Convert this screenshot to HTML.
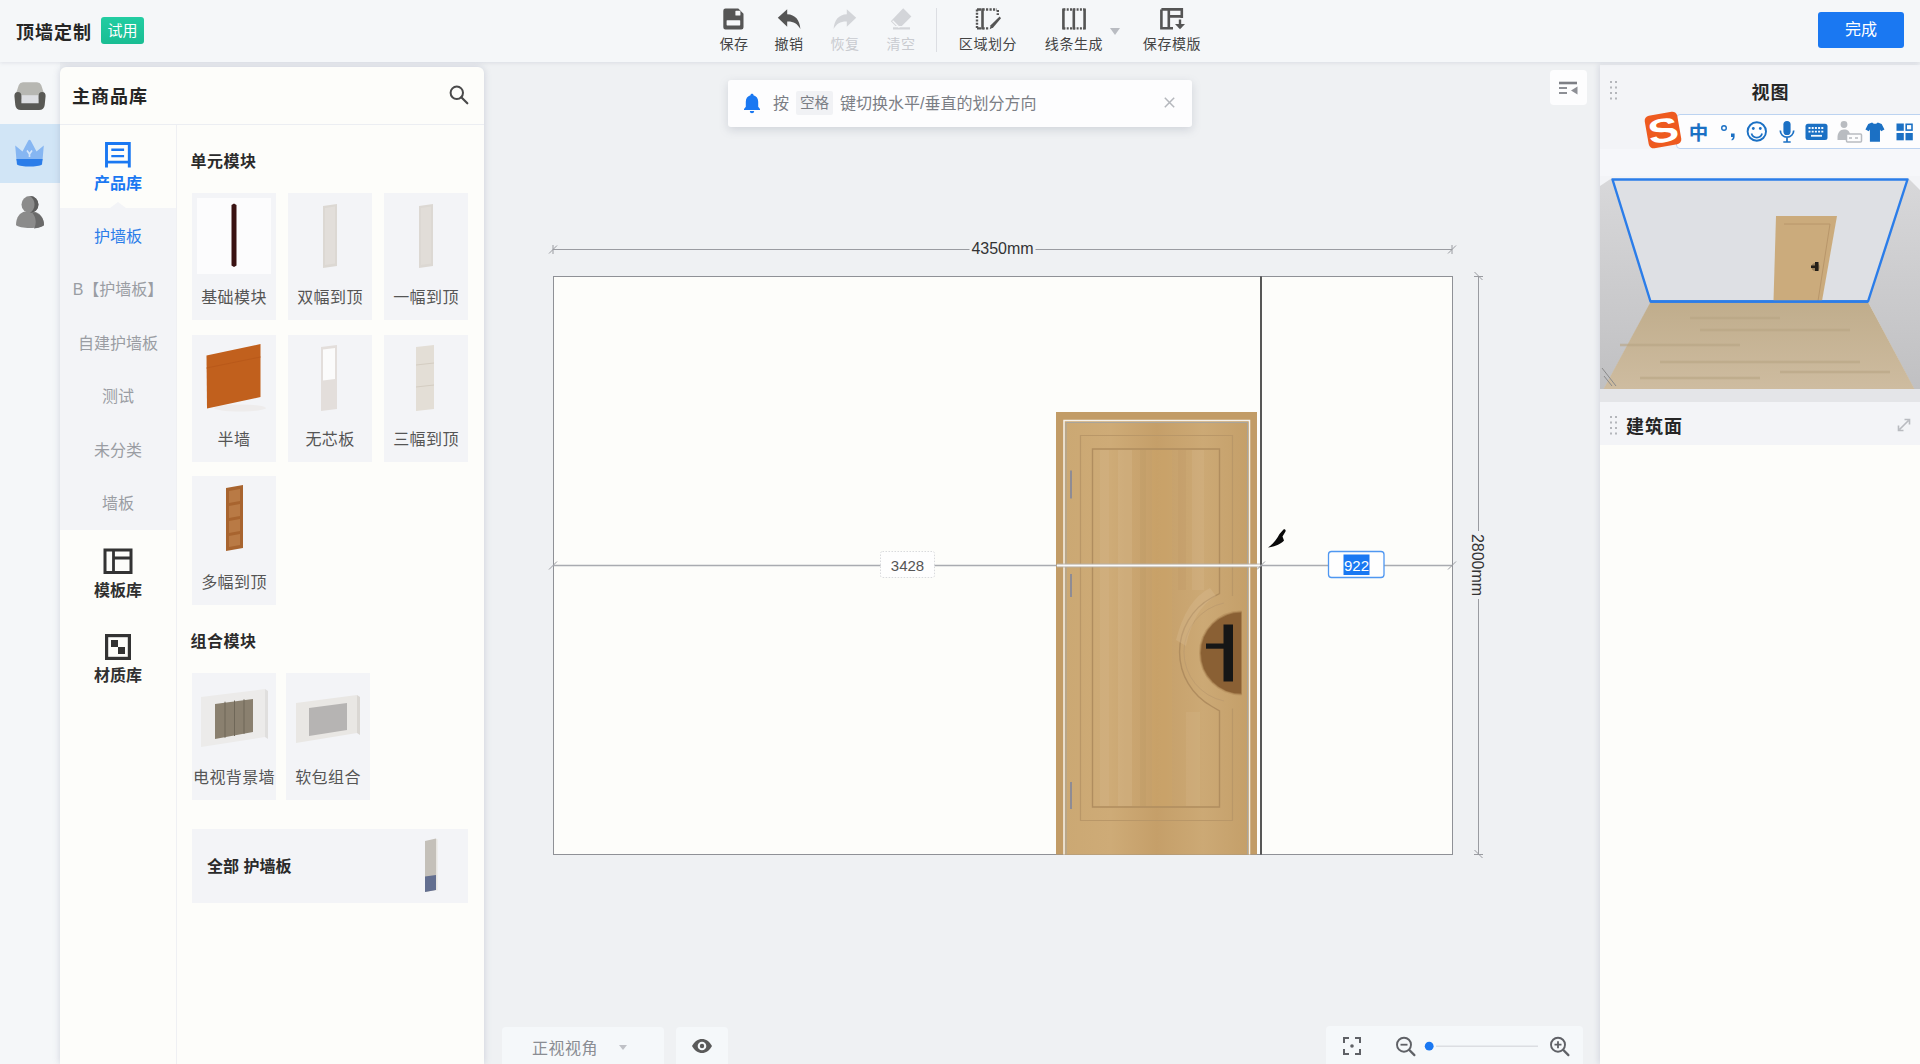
<!DOCTYPE html>
<html lang="zh-CN">
<head>
<meta charset="utf-8">
<title>顶墙定制</title>
<style>
*{box-sizing:border-box;margin:0;padding:0}
html,body{width:1920px;height:1064px;overflow:hidden}
body{position:relative;background:#eff1f3;font-family:"Liberation Sans","Noto Sans CJK SC",sans-serif;color:#333;font-size:14px}
.abs{position:absolute}
/* top bar */
#topbar{position:absolute;left:0;top:0;width:1920px;height:62px;background:#f5f7f9;box-shadow:0 1px 4px rgba(110,120,150,.16);z-index:3}
#title{position:absolute;left:16px;top:20px;font-size:18px;font-weight:700;line-height:27px;color:#262626;letter-spacing:1px}
#badge{position:absolute;left:101px;top:17px;width:43px;height:27px;border-radius:3px;background:linear-gradient(180deg,#23cda2,#19bd93);color:#fff;font-size:15px;line-height:27px;text-align:center}
.tb{position:absolute;top:7px;width:70px;text-align:center;letter-spacing:.6px;font-size:14px;color:#444;line-height:20px}
.tb svg{display:block;margin:0 auto 3px}
.tb.dis{color:#c9cbd0}
#done{position:absolute;left:1818px;top:12px;width:86px;height:36px;border-radius:3px;background:#1a78f2;color:#fff;font-size:16px;line-height:36px;text-align:center}
/* left rail */
#rail{position:absolute;left:0;top:62px;width:60px;height:1002px;background:#f5f7f9}
#railsel{position:absolute;left:0;top:125px;width:60px;height:59px;background:#d1e5f6}
/* panel */
#panel{position:absolute;left:60px;top:67px;width:424px;height:997px;background:#fdfdfa;border-radius:6px 6px 0 0;box-shadow:0 0 7px rgba(110,120,150,.28)}
#phead{position:absolute;left:0;top:0;width:424px;height:58px;border-bottom:1px solid #eceef2}
#phead b{position:absolute;left:12px;top:17px;font-size:18px;line-height:27px;color:#262626;letter-spacing:1px}
#cats{position:absolute;left:0;top:58px;width:117px;height:939px;border-right:1px solid #eff0f3}
#subcats{position:absolute;left:0;top:83px;width:116px;height:322px;background:#f3f4f7}
.sc{position:absolute;left:0;width:116px;text-align:center;font-size:16px;color:#9a9da3;line-height:20px}
.sc.on{color:#2b7de9}
.big{position:absolute;left:0;width:116px;text-align:center;font-size:16px;font-weight:700;color:#303030;line-height:20px}
.big.on{color:#1a78f2}
.sect{position:absolute;left:130.500px;letter-spacing:.5px;margin-top:1.500px;font-size:16px;font-weight:700;color:#2a2a2a;line-height:20px}
.card{position:absolute;width:84px;height:127px;background:#f3f4f7}
.card span{position:absolute;left:-4px;right:-4px;bottom:12px;text-align:center;font-size:16px;color:#555;line-height:20px;white-space:nowrap;letter-spacing:.4px}
.card svg{position:absolute;left:0;top:0}
#allbtn{position:absolute;left:132px;top:762px;width:276px;height:74px;background:#f3f4f7}
#allbtn b{position:absolute;left:15px;top:28px;font-size:16px;line-height:20px;color:#2a2a2a}
/* canvas */
#wall{position:absolute;left:553px;top:276px;width:900px;height:579px;background:#fdfdfa;border:1px solid #8f9196}
.lbl{position:absolute;font-size:14px;color:#333;line-height:18px;text-align:center}
/* notification */
#note{position:absolute;left:728px;top:80px;width:464px;height:47px;background:#fdfdfe;border-radius:3px;box-shadow:0 3px 10px rgba(100,110,130,.22);font-size:16px;color:#7b7e85;line-height:47px}
/* right */
#right{position:absolute;left:1600px;top:65px;width:320px;height:999px;background:#fdfdfa;box-shadow:-2px 0 5px rgba(120,130,160,.18)}
</style>
</head>
<body>
<div id="topbar">
  <div id="title">顶墙定制</div>
  <div id="badge">试用</div>

  <!-- toolbar -->
  <div class="tb" style="left:699px">
    <svg width="24" height="24" viewBox="0 0 24 24"><path d="M3.5 1.5h12.8l5.2 5.2v13.6a2.2 2.2 0 0 1-2.2 2.2H3.5a2.2 2.2 0 0 1-2.2-2.2V3.7a2.2 2.2 0 0 1 2.2-2.2z" fill="#555"/><rect x="13.400" y="3.800" width="5" height="4.800" rx=".6" fill="#f6f7f9"/><rect x="4.6" y="13.2" width="13.6" height="5.2" rx=".6" fill="#f6f7f9"/></svg>保存</div>
  <div class="tb" style="left:754px">
    <svg width="24" height="24" viewBox="0 0 24 24"><path d="M10.200 2.200v5c8 .4 12.600 5.600 13.200 14.800-3-5.200-7-7.600-13.200-7.400v5.200L.8 10.800z" fill="#555"/></svg>撤销</div>
  <div class="tb dis" style="left:810px">
    <svg width="24" height="24" viewBox="0 0 24 24"><path d="M13.800 2.200v5C5.800 7.600 1.200 12.800.600 22c3-5.200 7-7.600 13.200-7.400v5.200l9.400-9z" fill="#d3d5d9"/></svg>恢复</div>
  <div class="tb dis" style="left:866px">
    <svg width="24" height="24" viewBox="0 0 24 24"><path d="M14.200 1.200l8.200 8.200-9.600 9.600H6.600L1.800 14.200z" fill="#d3d5d9"/><path d="M4 21.400h17" stroke="#d3d5d9" stroke-width="2.200"/><path d="M3.600 13.800l6.800 6.800" stroke="#f6f7f9" stroke-width="1.400"/></svg>清空</div>
  <div class="abs" style="left:936px;top:8px;width:1px;height:44px;background:#dcdee3"></div>
  <div class="tb" style="left:953px">
    <svg width="26" height="24" viewBox="0 0 26 24"><path d="M2 2.500v19" stroke="#555" stroke-width="2.400" stroke-dasharray="2 1.300"/><path d="M7.500 1.400v21" stroke="#555" stroke-width="2.600"/><path d="M7.500 2.500h14.500" stroke="#555" stroke-width="2.400" stroke-dasharray="2.200 1.300"/><path d="M7.500 21.400h7" stroke="#555" stroke-width="2.400" stroke-dasharray="2.200 1.300"/><path d="M2 2.500h4M2 21.400h4" stroke="#555" stroke-width="2.400"/><path d="M22.800 3v5" stroke="#555" stroke-width="2.400" stroke-dasharray="2 1.300"/><path d="M24.600 9.600l1.400 1.600-7.600 9-3.600 2 .8-4z" fill="#555"/></svg>区域划分</div>
  <div class="tb" style="left:1039px">
    <svg width="26" height="24" viewBox="0 0 26 24"><path d="M2.400 1.400v21M12.800 1.400v21M23.600 1.400v21" stroke="#555" stroke-width="2.600"/><path d="M2.400 2.500h21M2.400 21.400h21" stroke="#555" stroke-width="2.400" stroke-dasharray="2 1.300"/></svg>线条生成</div>
  <svg class="abs" style="left:1110px;top:28px" width="10" height="7" viewBox="0 0 10 7"><path d="M0 0h10L5 7z" fill="#b9bcc2"/></svg>
  <div class="tb" style="left:1137px">
    <svg width="26" height="24" viewBox="0 0 26 24"><path d="M2.400 2.400h20.400v8.500M2.400 2.400v18.800h11.600" fill="none" stroke="#555" stroke-width="2.600"/><path d="M9.800 2.400v18.800M9.800 9.400h13" stroke="#555" stroke-width="2.600"/><path d="M21 12.500v8.500" stroke="#555" stroke-width="2.400"/><path d="M16 17l5 5.200 5-5.200z" fill="#555"/></svg>保存模版</div>
  <div id="done">完成</div>
</div>
<div id="rail"><div id="railsel" style="top:62px"></div>
  <!-- sofa -->
  <svg class="abs" style="left:13.500px;top:19.800px" width="32" height="29" viewBox="0 0 32 29"><path d="M9 .3h14q3 0 4.200 2.800l2.300 7v7h-27v-7l2.300-7Q6 .3 9 .3z" fill="#b7b7b2"/><rect x="7.200" y="13.200" width="17.600" height="8.500" fill="#dddee2"/><path d="M.4 14q0-4 3.500-4t3.500 4v7.200h17.200V14q0-4 3.500-4t3.500 4l-.9 9q-.6 5-5.600 5H6.900q-5 0-5.600-5z" fill="#595955"/></svg>
  <!-- crown -->
  <svg class="abs" style="left:14px;top:76px" width="31" height="30" viewBox="0 0 31 30"><path d="M1.200 7.500l7.300 6L14.300 2.500q1.200-1.500 2.400 0L22.500 13.500l7.300-6-1.300 15h-26z" fill="#86b6f2"/><path d="M2.400 21h26.200l-.6 5.500c-4 2.800-21 2.800-25 0z" fill="#2b7de9"/><path d="M13 12.500l2.500 3.500 2.500-3.500M15.500 16v3" stroke="#d6e7fb" stroke-width="1.600" fill="none"/></svg>
  <!-- user -->
  <svg class="abs" style="left:15px;top:133px" width="30" height="34" viewBox="0 0 30 34"><path d="M1 30c0-8 4-12.500 9-13.500h9c5 1 10 5.500 10 13.500-3 4-25 4-28 0z" fill="#8b8b8b"/><circle cx="15" cy="9.500" r="8.500" fill="#8b8b8b"/><path d="M15 1a8.500 8.500 0 0 1 0 17c3-2 4.500-5 4.500-8.500S18 3 15 1z" fill="#5d5d5d"/><path d="M17 17.500h2.500c5 1 9.500 5.500 9.500 12.500-1.500 2-6 3-10 3.500 3-5 2-12-2-16z" fill="#6a6a6a"/></svg>
</div>
<div id="panel">
  <div id="phead"><b>主商品库</b>
    <svg class="abs" style="left:388px;top:17px" width="22" height="22" viewBox="0 0 22 22"><circle cx="8.800" cy="8.800" r="6.200" fill="none" stroke="#4a4a4a" stroke-width="2"/><path d="M13.300 13.300l6 6" stroke="#4a4a4a" stroke-width="2.200" stroke-linecap="round"/></svg>
  </div>
  <div id="cats">
    <svg class="abs" style="left:44.500px;top:17px" width="26" height="26" viewBox="0 0 26 26"><path d="M1.500 25.400V1.500h22.800v23.900" fill="none" stroke="#1a78f2" stroke-width="2.900"/><path d="M1.500 20.100h22.800" stroke="#1a78f2" stroke-width="2.700"/><path d="M6.300 7.700h12.800M6.300 14.100h12.800" stroke="#1a78f2" stroke-width="2.400"/></svg>
    <div class="big on" style="top:49px">产品库</div>
    <div id="subcats">
      <svg class="abs" style="left:50px;top:-6px" width="16" height="6" viewBox="0 0 16 6"><path d="M0 6l8-6 8 6z" fill="#f3f4f7"/></svg>
      <div class="sc on" style="top:19px">护墙板</div>
      <div class="sc" style="top:72px">B【护墙板】</div>
      <div class="sc" style="top:126px">自建护墙板</div>
      <div class="sc" style="top:179px">测试</div>
      <div class="sc" style="top:233px">未分类</div>
      <div class="sc" style="top:286px">墙板</div>
    </div>
    <svg class="abs" style="left:42.500px;top:423px" width="30" height="27" viewBox="0 0 30 27"><rect x="2" y="2" width="26" height="22.500" fill="none" stroke="#333" stroke-width="3"/><path d="M10.500 2v22.500M10.500 10h17.500" stroke="#333" stroke-width="2.800"/></svg>
    <div class="big" style="top:456px">模板库</div>
    <svg class="abs" style="left:44px;top:508px" width="28" height="28" viewBox="0 0 28 28"><rect x="2.600" y="2.600" width="22.800" height="22.800" fill="none" stroke="#333" stroke-width="3.200"/><rect x="7" y="7" width="7" height="7" fill="#333"/><rect x="14" y="14" width="7" height="7" fill="#333"/></svg>
    <div class="big" style="top:541px">材质库</div>
  </div>
  <div class="sect" style="top:83px">单元模块</div>
  <div class="card" style="left:132px;top:126px"><svg width="84" height="90" viewBox="0 0 84 90"><rect x="5" y="5" width="74" height="76" fill="#fcfcfd"/><path d="M39.500 12l2.500-1.500 2.500 1.500v60.500l-2.500 1.500-2.500-1.500z" fill="#3a1212"/></svg><span>基础模块</span></div>
  <div class="card" style="left:228px;top:126px"><svg width="84" height="90" viewBox="0 0 84 90"><path d="M35 13l14-2v62l-14 2z" fill="#dcd8d3"/><path d="M37 15l10-1.400v57l-10 1.400z" fill="#e2deda"/></svg><span>双幅到顶</span></div>
  <div class="card" style="left:324px;top:126px"><svg width="84" height="90" viewBox="0 0 84 90"><path d="M35 13l14-2v62l-14 2z" fill="#dcd8d3"/><path d="M37 15l10-1.400v57l-10 1.400z" fill="#e1ddd8"/></svg><span>一幅到顶</span></div>
  <div class="card" style="left:132px;top:268px"><svg width="84" height="90" viewBox="0 0 84 90"><ellipse cx="48" cy="73" rx="26" ry="3.500" fill="#eeecec"/><path d="M14.500 20.500L68.500 9v53L15 73.500z" fill="#c1601d"/><path d="M14.500 33L68.500 22" stroke="#b9591a" stroke-width="1" fill="none"/></svg><span>半墙</span></div>
  <div class="card" style="left:228px;top:268px"><svg width="84" height="90" viewBox="0 0 84 90"><path d="M33 12l16-2v64l-16 2z" fill="#e3dedb"/><path d="M35 14.500l12-1.500v31l-12 1.500z" fill="#fbfbfb"/></svg><span>无芯板</span></div>
  <div class="card" style="left:324px;top:268px"><svg width="84" height="90" viewBox="0 0 84 90"><path d="M32 12l18-2v64l-18 2z" fill="#e3ded6"/><path d="M32 30l18-2M32 52l18-2" stroke="#d4cdc2" stroke-width="1"/></svg><span>三幅到顶</span></div>
  <div class="card" style="left:132px;top:409px;height:129px"><svg width="84" height="90" viewBox="0 0 84 90"><path d="M34 12l17-3v63l-17 3z" fill="#a8642f"/><path d="M37 15l11-2v12l-11 2zM37 30l11-2v12l-11 2zM37 45l11-2v12l-11 2zM37 60l11-2v11l-11 2z" fill="#b97a45"/></svg><span>多幅到顶</span></div>
  <div class="sect" style="top:563px">组合模块</div>
  <div class="card" style="left:132px;top:606px"><svg width="84" height="90" viewBox="0 0 84 90"><path d="M9 24l64-8v48l-64 10z" fill="#ecebea"/><path d="M73 16l3 2v48l-3-2z" fill="#e0dfde"/><path d="M23 31l38-5v33l-38 7z" fill="#8a806f"/><path d="M33 28.700v36M42.500 27.500v35.500M52 26.300v34.500" stroke="#6f6758" stroke-width="1"/></svg><span>电视背景墙</span></div>
  <div class="card" style="left:226px;top:606px"><svg width="84" height="90" viewBox="0 0 84 90"><path d="M10 30l61-8v38l-61 10z" fill="#e9e7e4"/><path d="M71 22l3 2v38l-3-2z" fill="#dad7d3"/><path d="M23 35l38-5v27L23 63z" fill="#b6b4b3"/></svg><span>软包组合</span></div>
  <div id="allbtn"><b>全部 护墙板</b>
    <svg class="abs" style="left:228px;top:6px" width="24" height="62" viewBox="0 0 24 62"><path d="M5 6l11-2.500V55L5 57z" fill="#c4c0b9"/><path d="M16 3.500l1.500 1V56L16 55z" fill="#e8e6e2"/><path d="M5 41.500l11-1.500V55L5 57z" fill="#636f90"/></svg>
  </div>
</div>
<div id="wall"></div>
<svg class="abs" style="left:500px;top:220px" width="1040" height="660" viewBox="500 220 1040 660">
  <defs>
    <linearGradient id="wood" x1="0" x2="1" y1="0" y2="0">
      <stop offset="0" stop-color="#cba873"/><stop offset=".25" stop-color="#ceab77"/><stop offset=".5" stop-color="#c59f69"/><stop offset=".75" stop-color="#cca975"/><stop offset="1" stop-color="#c49f69"/>
    </linearGradient>
  </defs>
  <!-- top dimension -->
  <path d="M553 249.500h899" stroke="#9a9ca1" stroke-width="1"/>
  <path d="M549 253.500l8-8M553 245v9M1448 253.500l8-8M1452 245v9" stroke="#9a9ca1" stroke-width="1"/>
  <rect x="969.500" y="240" width="66" height="18" fill="#eff1f3"/>
  <text x="1002.500" y="254" font-size="16" fill="#333" text-anchor="middle" font-family="Liberation Sans, sans-serif">4350mm</text>
  <!-- right dimension -->
  <path d="M1478.500 276v578" stroke="#9a9ca1" stroke-width="1"/>
  <path d="M1474.500 272l8 8M1474 276.500h9M1474.500 850l8 8M1474 854.500h9" stroke="#9a9ca1" stroke-width="1"/>
  <rect x="1469" y="531" width="18" height="68" fill="#eff1f3"/>
  <text transform="translate(1472,565) rotate(90)" font-size="16" fill="#333" text-anchor="middle" font-family="Liberation Sans, sans-serif">2800mm</text>
  <!-- door -->
  <rect x="1056" y="412" width="201" height="442.500" fill="#c29c66"/>
  <rect x="1064" y="420.500" width="185.500" height="434" fill="url(#wood)"/>
  <path d="M1064 854.500v-434h185.500v434" fill="none" stroke="#f6f2ec" stroke-width="1.500"/>
  <path d="M1066 854.500v-432h181.500v432" fill="none" stroke="#a9a49a" stroke-width="1"/>
  <path d="M1232.500 596v-160.500h-152v385h152v-112" fill="none" stroke="#b99768" stroke-width="1.200"/>
  <path d="M1092.500 449h127v144.500l-7.500 4A62 62 0 0 0 1212 706.500l7.500 4.500v96h-127z" fill="none" stroke="#b08d5f" stroke-width="1.400"/>
  <path d="M1224 603A50 50 0 0 0 1224 701" fill="none" stroke="#bf9d6f" stroke-width="1"/>
  <path d="M1241.500 611.500a41.500 41.500 0 0 0 0 83z" fill="#8a6034"/>
  <path d="M1241.500 611.500a41.500 41.500 0 0 0 0 83" fill="none" stroke="#b08a58" stroke-width="2" opacity=".6"/>
  <rect x="1223.500" y="624.500" width="9.500" height="57" fill="#161616"/>
  <rect x="1206" y="643.500" width="18" height="5.200" fill="#161616"/>
  <path d="M1071 470.500v28M1071 574v23M1071 782v27" stroke="#8f8c94" stroke-width="2"/>
  <g opacity=".5"><rect x="1100" y="450" width="9" height="356" fill="#d8ba8f" opacity=".5"/><rect x="1118" y="450" width="14" height="356" fill="#d9bc92" opacity=".55"/><rect x="1140" y="450" width="6" height="356" fill="#b99562" opacity=".4"/><rect x="1152" y="450" width="20" height="356" fill="#d2a868" opacity=".45"/><rect x="1178" y="450" width="8" height="140" fill="#b99562" opacity=".35"/><rect x="1192" y="450" width="12" height="140" fill="#d8ba8f" opacity=".5"/><path d="M1176 640q10-40 34-52l6 8q-22 12-30 50z" fill="#dcc097" opacity=".6"/><rect x="1186" y="712" width="14" height="94" fill="#d8ba8f" opacity=".45"/></g>
  <!-- split lines -->
  <path d="M1261 276.500v578" stroke="#2e2e2e" stroke-width="1.600"/>
  <path d="M553 565.500h899" stroke="#a9abb0" stroke-width="1.300"/>
  <path d="M1057 565.500h203" stroke="#fbfbfb" stroke-width="2.400"/>
  <path d="M1057 564h203M1057 567h203" stroke="#b5b0a8" stroke-width=".8"/>
  <path d="M549 569.500l8-8M1448 569.500l8-8M1257 569.500l8-8" stroke="#9a9ca1" stroke-width="1"/>
  <!-- 3428 label -->
  <rect x="880.500" y="551.500" width="54" height="26" rx="2" fill="#fefefe" stroke="#d9dadd" stroke-width="1" stroke-dasharray="1.500 1.500"/>
  <text x="907.500" y="570.500" font-size="15" fill="#555" text-anchor="middle" font-family="Liberation Sans, sans-serif">3428</text>
  <!-- 922 input -->
  <rect x="1328.500" y="551.500" width="55.500" height="26" rx="3" fill="#fefefe" stroke="#4f97f1" stroke-width="1.300"/>
  <rect x="1343.500" y="554.500" width="26" height="20.500" fill="#1a78f2"/>
  <text x="1356.500" y="570.500" font-size="15" fill="#fff" text-anchor="middle" font-family="Liberation Sans, sans-serif">922</text>
  <!-- knife cursor -->
  <path d="M1268 547.500c4.500-3 9-8.500 11.500-13.500l4-4.500c1.500-.5 2.500.5 2 2l-3 5 1.500 4c-3 3.500-10 6.500-16 7z" fill="#0a0a0a"/>
</svg>
<!-- small collapse button -->
<div class="abs" style="left:1550px;top:70px;width:37px;height:35px;border-radius:4px;background:#fdfdfe">
  <svg class="abs" style="left:8px;top:10px" width="22" height="16" viewBox="0 0 22 16"><path d="M1 3h18" stroke="#7d7f85" stroke-width="2.600"/><path d="M1 8h8M1 13h8" stroke="#8d8f95" stroke-width="1.800"/><path d="M19.500 6.500v8l-6.500-4z" fill="#8d8f95"/></svg>
</div>
<div id="note">
  <svg class="abs" style="left:15px;top:13px" width="18" height="21" viewBox="0 0 18 21"><path d="M9 .8c.9 0 1.500.6 1.500 1.400 3 .8 4.700 3.300 4.700 6.500v5l1.800 2.300v.9H1v-.9l1.800-2.300v-5c0-3.200 1.700-5.700 4.700-6.500C7.500 1.400 8.100.8 9 .8z" fill="#1a78f2"/><path d="M6.800 18h4.400a2.200 2.200 0 0 1-4.400 0z" fill="#1a78f2"/></svg>
  <span class="abs" style="left:45px;top:0">按</span>
  <span class="abs" style="left:68px;top:11px;width:37px;height:24px;line-height:24px;background:#f1f2f5;border-radius:2px;text-align:center;font-size:14.500px">空格</span>
  <span class="abs" style="left:112px;top:0;white-space:nowrap">键切换水平/垂直的划分方向</span>
  <svg class="abs" style="left:436px;top:17px" width="11" height="11" viewBox="0 0 11 11"><path d="M.8.800l9.400 9.400M10.200.800L.8 10.200" stroke="#b4b7bc" stroke-width="1.500"/></svg>
</div>
<div id="right">
  <div class="abs" style="left:0;top:0;width:320px;height:111px;background:#f3f4f7"></div>
  <div class="abs" style="left:0;top:84px;width:320px;height:27px;background:#f6f7fa"></div>
  <svg class="abs" style="left:10px;top:16px" width="8" height="20" viewBox="0 0 8 20"><g fill="#b4b6bb"><rect x="0" y="0" width="2" height="2"/><rect x="5" y="0" width="2" height="2"/><rect x="0" y="5.500" width="2" height="2"/><rect x="5" y="5.500" width="2" height="2"/><rect x="0" y="11" width="2" height="2"/><rect x="5" y="11" width="2" height="2"/><rect x="0" y="16.500" width="2" height="2"/><rect x="5" y="16.500" width="2" height="2"/></g></svg>
  <b class="abs" style="left:0;top:14.500px;width:341px;text-align:center;font-size:18px;line-height:27px;color:#262626;letter-spacing:1px">视图</b>
  <!-- 3D view -->
  <svg class="abs" style="left:0;top:111px" width="320" height="213" viewBox="1600 176 320 213">
    <defs><linearGradient id="wl" x1="0" x2="0" y1="0" y2="1"><stop offset="0" stop-color="#d8d8da"/><stop offset="1" stop-color="#c0c0c2"/></linearGradient><linearGradient id="flr" x1="0" x2="0" y1="0" y2="1"><stop offset="0" stop-color="#c0ad8c"/><stop offset="1" stop-color="#cebca0"/></linearGradient></defs>
    <rect x="1600" y="174" width="320" height="215" fill="#f3f4f7"/>
    <path d="M1600 186l12-8 39 124-47 87h-4z" fill="url(#wl)"/>
    <path d="M1920 190l-12-12-40 124 46 87h6z" fill="url(#wl)"/>
    <path d="M1650.500 302h217.500l46.500 87h-311z" fill="url(#flr)"/>
    <path d="M1612.500 179.500h295l-39.500 122h-217.500z" fill="#dee0e4" stroke="#2b7de9" stroke-width="2.400" stroke-linejoin="round"/>
    <path d="M1776 216h61l-15 85h-48.500z" fill="#cbab7c"/>
    <path d="M1784 224h46l-12 77" fill="none" stroke="#b8966a" stroke-width="1"/>
    <path d="M1650.500 301.500h217.500" stroke="#2b7de9" stroke-width="2.400"/>
    <path d="M1815 262h3.500v9H1815zM1811 265.500h4v2.500h-4z" fill="#1a1a1a"/>
    <circle cx="1815.500" cy="267" r="4" fill="#3a2a18" opacity=".35"/>
    <path d="M1602 368l14 18M1604 376l8 10" stroke="#8a8a8a" stroke-width="1"/>
    <path d="M1620 345h120M1700 330h150M1660 362h200M1640 378h120M1780 372h110M1690 318h90" stroke="#b8a584" stroke-width="2.500" opacity=".6"/>
  </svg>
  <div class="abs" style="left:0;top:323.500px;width:320px;height:13px;background:#e4e5e8"></div>
  <div class="abs" style="left:0;top:337px;width:320px;height:43px;background:#f3f4f7"></div>
  <svg class="abs" style="left:10px;top:351px" width="8" height="20" viewBox="0 0 8 20"><g fill="#b4b6bb"><rect x="0" y="0" width="2" height="2"/><rect x="5" y="0" width="2" height="2"/><rect x="0" y="5.500" width="2" height="2"/><rect x="5" y="5.500" width="2" height="2"/><rect x="0" y="11" width="2" height="2"/><rect x="5" y="11" width="2" height="2"/><rect x="0" y="16.500" width="2" height="2"/><rect x="5" y="16.500" width="2" height="2"/></g></svg>
  <b class="abs" style="left:26px;top:348.500px;font-size:18px;line-height:27px;color:#262626;letter-spacing:1px">建筑面</b>
  <svg class="abs" style="left:297px;top:353px" width="14" height="14" viewBox="0 0 14 14"><path d="M2.500 11.500l9-9M7.500 1.500h5v5M1.500 7.500v5h5" fill="none" stroke="#b9bbc0" stroke-width="1.600"/></svg>
</div>
<!-- IME bar -->
<div class="abs" style="left:1676px;top:114px;width:250px;height:35px;background:#fdfdfe;border:1px solid #bcd3f1;border-radius:4px"></div>
<svg class="abs" style="left:1640px;top:108px" width="280" height="44" viewBox="1640 108 280 44">
  <g transform="rotate(-10 1663 130)"><rect x="1646.500" y="113.500" width="33" height="33" rx="5" fill="#ee5a1f"/>
  <text x="1663" y="142.500" font-size="35" font-weight="700" fill="#fff" text-anchor="middle" font-family="Liberation Sans, sans-serif" transform="translate(1663 0) scale(1.320 .96) translate(-1663 5.500)">S</text></g>
  <text x="1698.500" y="140" font-size="19.500" font-weight="700" fill="#1b70c4" text-anchor="middle" font-family="Liberation Sans, Noto Sans CJK SC, sans-serif">中</text>
  <circle cx="1724" cy="128" r="2.300" fill="none" stroke="#1b70c4" stroke-width="1.400"/>
  <path d="M1731 133.500h3.600v3.300c0 2-1 3.300-3 3.800v-1.400c.9-.4 1.300-1 1.300-2.100h-1.900z" fill="#1b70c4"/>
  <circle cx="1756.800" cy="131.500" r="9.200" fill="none" stroke="#1b70c4" stroke-width="1.900"/>
  <circle cx="1753.300" cy="128.500" r="1.400" fill="#1b70c4"/><circle cx="1760.300" cy="128.500" r="1.400" fill="#1b70c4"/>
  <path d="M1751.500 133.500a5.500 5.500 0 0 0 10.600 0" fill="none" stroke="#1b70c4" stroke-width="1.700"/>
  <rect x="1783.400" y="121" width="7.200" height="14" rx="3.600" fill="#1b70c4"/>
  <path d="M1780.300 130.500a6.700 6.700 0 0 0 13.400 0M1787 137.500v4M1783.300 142h7.400" fill="none" stroke="#1b70c4" stroke-width="1.700"/>
  <rect x="1805.500" y="123.800" width="22" height="16.200" rx="2.500" fill="#1b70c4"/>
  <path d="M1808.500 128h16M1808.500 131.600h16" stroke="#f4f8fd" stroke-width="1.900" stroke-dasharray="2 1.200"/><path d="M1811 135.800h11" stroke="#f4f8fd" stroke-width="1.800"/>
  <circle cx="1844" cy="124.500" r="3.400" fill="#b9bcc1"/><path d="M1837.500 138c0-5.500 2.500-8.500 6.500-8.500s5.500 2 6 4.500h-4v6h-8.500z" fill="#b9bcc1"/><rect x="1846.500" y="134" width="15" height="8" rx="1" fill="none" stroke="#b9bcc1" stroke-width="1.500"/><path d="M1849 138h3M1855 138h3" stroke="#b9bcc1" stroke-width="1.500"/>
  <path d="M1871.500 123.500l3.500-1.500c1 1.500 4 1.500 5 0l3.500 1.500 2.500 5-3 1.500-1-1.500v11h-9v-11l-1 1.500-3-1.500z" fill="#1b70c4" transform="translate(1875.500 132) scale(1.120 1.100) translate(-1878 -130.700)"/>
  <rect x="1896.500" y="123.500" width="7.300" height="7.300" fill="#1b70c4"/><rect x="1906.200" y="124.300" width="5.800" height="5.800" fill="none" stroke="#1b70c4" stroke-width="1.600"/><rect x="1896.500" y="133" width="7.300" height="7.300" fill="#1b70c4"/><rect x="1905.500" y="133" width="7.300" height="7.300" fill="#1b70c4"/>
</svg>
<!-- bottom bar -->
<div class="abs" style="left:502px;top:1027px;width:162px;height:37px;background:#f5f8fa;border-radius:4px 4px 0 0;font-size:16px;color:#8a8d93;line-height:43px;padding-left:30px;letter-spacing:.5px">正视视角
  <svg class="abs" style="left:117px;top:18px" width="8" height="5" viewBox="0 0 8 5"><path d="M0 0h8L4 5z" fill="#bfc1c6"/></svg>
</div>
<div class="abs" style="left:676px;top:1027px;width:52px;height:37px;background:#f5f8fa;border-radius:4px 4px 0 0">
  <svg class="abs" style="left:15px;top:11px" width="22" height="16" viewBox="0 0 22 16"><path d="M1 8c2.500-4.500 6-7 10-7s7.500 2.500 10 7c-2.500 4.500-6 7-10 7S3.500 12.500 1 8z" fill="#5a5a5a"/><circle cx="11" cy="8" r="4.300" fill="#f5f8fa"/><circle cx="11" cy="8" r="2.200" fill="#5a5a5a"/></svg>
</div>
<div class="abs" style="left:1326px;top:1026px;width:257px;height:38px;background:#f5f8fa;border-radius:4px 4px 0 0"></div>
<svg class="abs" style="left:1330px;top:1030px" width="260" height="32" viewBox="1330 1030 260 32">
  <path d="M1344 1043v-5h5M1355 1038h5v5M1360 1049v5h-5M1349 1054h-5v-5" fill="none" stroke="#5f6166" stroke-width="2"/><circle cx="1352" cy="1046" r="1.800" fill="#5f6166"/>
  <circle cx="1404" cy="1044.700" r="7" fill="none" stroke="#5f6166" stroke-width="1.900"/><path d="M1409.200 1049.900l5.200 5.200" stroke="#5f6166" stroke-width="2.200" stroke-linecap="round"/><path d="M1400.500 1044.700h7" stroke="#5f6166" stroke-width="1.800"/>
  <path d="M1436 1046.200h102" stroke="#dcdee2" stroke-width="1.500"/>
  <circle cx="1429.200" cy="1046.200" r="4.400" fill="#1a78f2"/>
  <circle cx="1558" cy="1044.700" r="7" fill="none" stroke="#5f6166" stroke-width="1.900"/><path d="M1563.200 1049.900l5.200 5.200" stroke="#5f6166" stroke-width="2.200" stroke-linecap="round"/><path d="M1554.500 1044.700h7M1558 1041.200v7" stroke="#5f6166" stroke-width="1.800"/>
</svg>
</body>
</html>
